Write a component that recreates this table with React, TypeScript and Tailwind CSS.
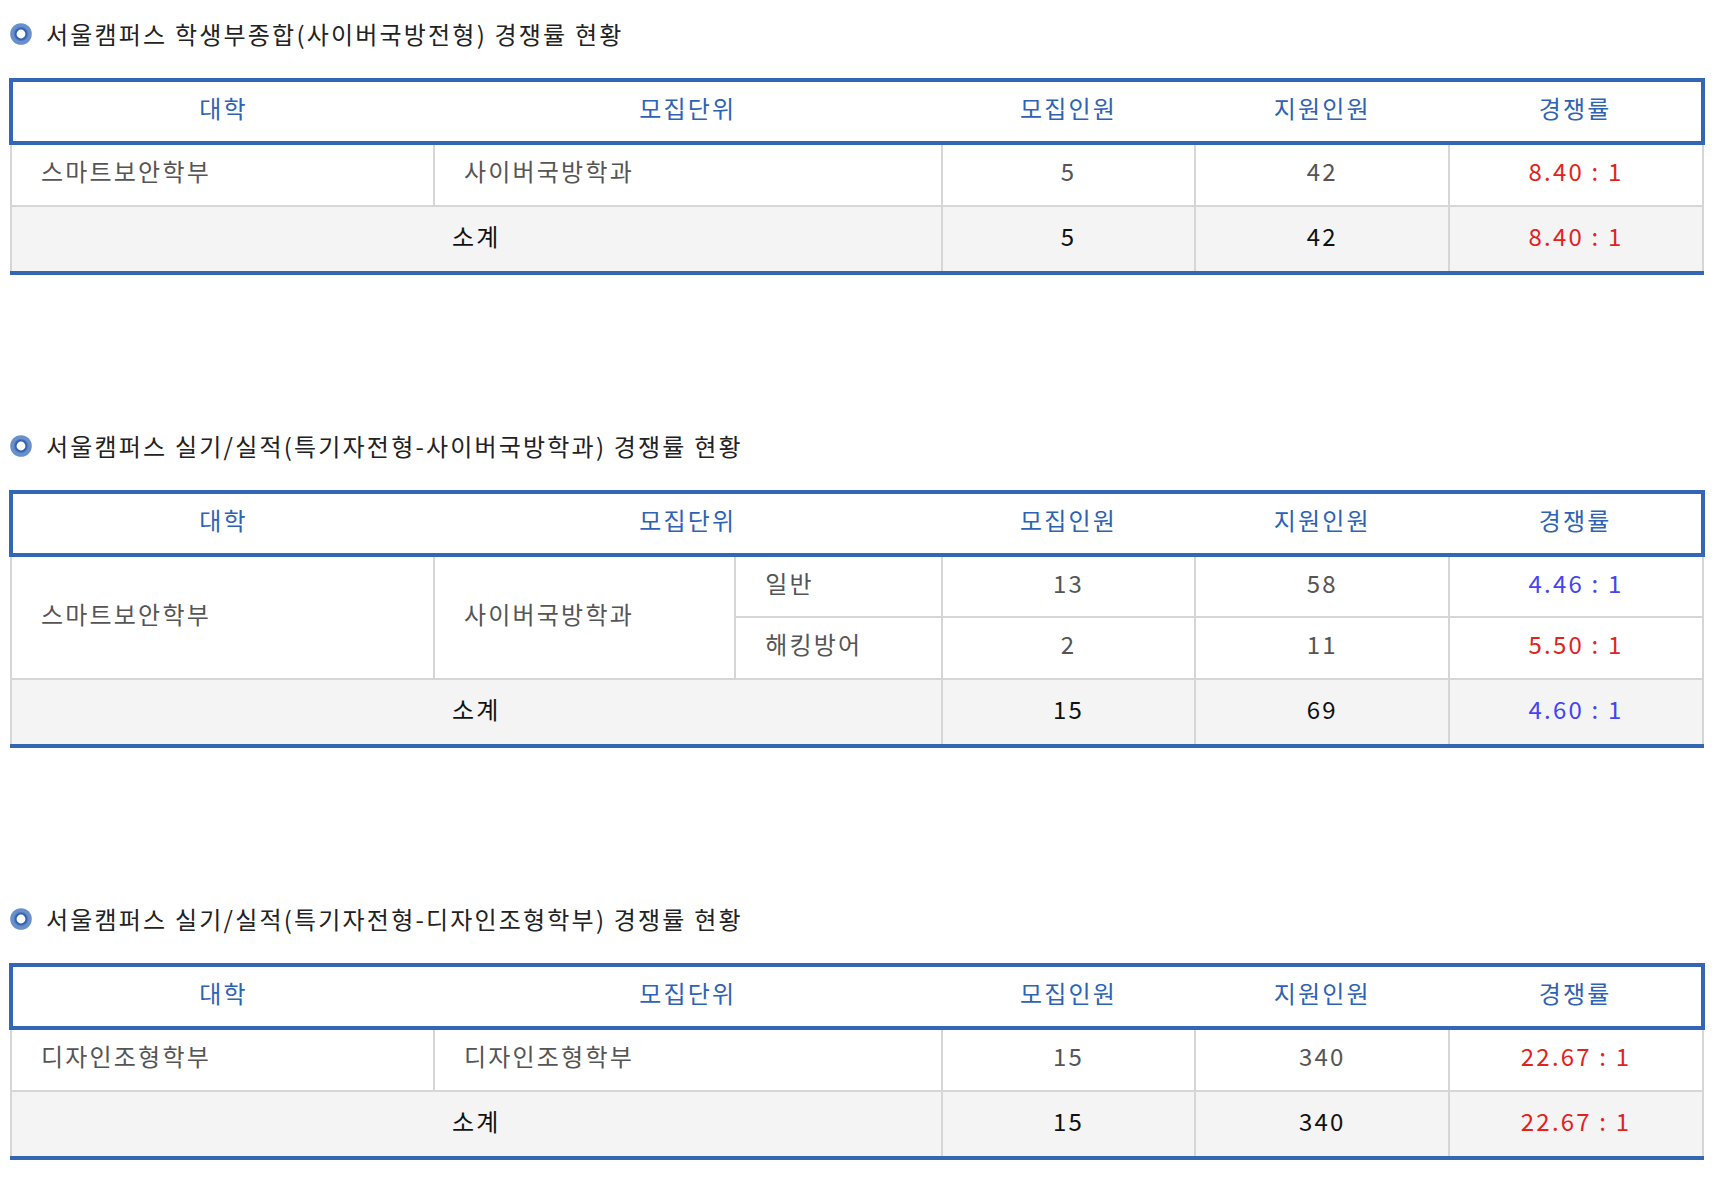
import React from 'react';

type Ratio = 'red' | 'blue';

type Row = {
    college?: { text: string; rowSpan: number };
    dept?: { text: string; rowSpan: number };
    track?: string;
    quota: number;
    applicants: number;
    ratio: string;
    ratioColor: Ratio;
};

type Section = {
    title: string;
    hasTrack: boolean;
    rows: Row[];
    total: { quota: number; applicants: number; ratio: string; ratioColor: Ratio };
};

const sections: Section[] = [
    {
        title: '서울캠퍼스 학생부종합(사이버국방전형) 경쟁률 현황',
        hasTrack: false,
        rows: [
            {
                college: { text: '스마트보안학부', rowSpan: 1 },
                dept: { text: '사이버국방학과', rowSpan: 1 },
                quota: 5,
                applicants: 42,
                ratio: '8.40 : 1',
                ratioColor: 'red',
            },
        ],
        total: { quota: 5, applicants: 42, ratio: '8.40 : 1', ratioColor: 'red' },
    },
    {
        title: '서울캠퍼스 실기/실적(특기자전형-사이버국방학과) 경쟁률 현황',
        hasTrack: true,
        rows: [
            {
                college: { text: '스마트보안학부', rowSpan: 2 },
                dept: { text: '사이버국방학과', rowSpan: 2 },
                track: '일반',
                quota: 13,
                applicants: 58,
                ratio: '4.46 : 1',
                ratioColor: 'blue',
            },
            { track: '해킹방어', quota: 2, applicants: 11, ratio: '5.50 : 1', ratioColor: 'red' },
        ],
        total: { quota: 15, applicants: 69, ratio: '4.60 : 1', ratioColor: 'blue' },
    },
    {
        title: '서울캠퍼스 실기/실적(특기자전형-디자인조형학부) 경쟁률 현황',
        hasTrack: false,
        rows: [
            {
                college: { text: '디자인조형학부', rowSpan: 1 },
                dept: { text: '디자인조형학부', rowSpan: 1 },
                quota: 15,
                applicants: 340,
                ratio: '22.67 : 1',
                ratioColor: 'red',
            },
        ],
        total: { quota: 15, applicants: 340, ratio: '22.67 : 1', ratioColor: 'red' },
    },
];

// colour of the ratio text
const ratioClass = (c: Ratio) => (c === 'red' ? 'text-[#e2231d]' : 'text-[#4545ee]');

const TitleIcon: React.FC = () => (
    <svg width="24" height="24" viewBox="0 0 24 24" className="shrink-0">
        <defs>
            <radialGradient id="ring" cx="50%" cy="50%" r="50%">
                <stop offset="35%" stopColor="#4f80cb" />
                <stop offset="70%" stopColor="#2d5dad" />
                <stop offset="100%" stopColor="#6a90cc" />
            </radialGradient>
        </defs>
        <circle cx="12" cy="12" r="7.6" fill="none" stroke="url(#ring)" strokeWidth="6.4" />
    </svg>
);

const CompetitionTable: React.FC<{ section: Section }> = ({ section }) => {
    const th = 'h-[63px] pb-[8px] border-y-4 border-[#3366b3] text-[#2e63b3] font-normal text-center';
    const cell = 'border-2 border-[#d6d6d6] pb-[8px] text-[#555]';
    const sum = 'border-2 border-[#d6d6d6] border-b-4 border-b-[#3366b3] pb-[6px] text-center';
    return (
        <div>
            <div className="flex items-center gap-[13px] h-[30px] text-[24px] tracking-[2.2px] text-[#222] pb-[2px]">
                <TitleIcon />
                <span>{section.title}</span>
            </div>
            <table className="w-full table-fixed border-collapse mt-[28px] text-[24px] tracking-[2.2px]">
                <colgroup>
                    <col className="w-[25%]" />
                    {section.hasTrack ? (
                        <>
                            <col className="w-[17.8%]" />
                            <col className="w-[12.2%]" />
                        </>
                    ) : (
                        <col className="w-[30%]" />
                    )}
                    <col className="w-[15%]" />
                    <col className="w-[15%]" />
                    <col className="w-[15%]" />
                </colgroup>
                <thead>
                    <tr>
                        <th className={`${th} border-l-4`}>대학</th>
                        <th className={th} colSpan={section.hasTrack ? 2 : 1}>모집단위</th>
                        <th className={th}>모집인원</th>
                        <th className={th}>지원인원</th>
                        <th className={`${th} border-r-4`}>경쟁률</th>
                    </tr>
                </thead>
                <tbody>
                    {section.rows.map((r, i) => (
                        <tr key={i}>
                            {r.college && (
                                <td className={`${cell} h-[63px] pl-[29px]`} rowSpan={r.college.rowSpan}>{r.college.text}</td>
                            )}
                            {r.dept && (
                                <td className={`${cell} pl-[29px]`} rowSpan={r.dept.rowSpan}>{r.dept.text}</td>
                            )}
                            {section.hasTrack && <td className={`${cell} h-[62px] pl-[29px]`}>{r.track}</td>}
                            <td className={`${cell} text-center`}>{r.quota}</td>
                            <td className={`${cell} text-center`}>{r.applicants}</td>
                            <td className={`border-2 border-[#d6d6d6] pb-[8px] text-center ${ratioClass(r.ratioColor)}`}>{r.ratio}</td>
                        </tr>
                    ))}
                    <tr className="bg-[#f4f4f4]">
                        <td className={`${sum} h-[67px] text-[#111]`} colSpan={section.hasTrack ? 3 : 2}>소계</td>
                        <td className={`${sum} text-[#111]`}>{section.total.quota}</td>
                        <td className={`${sum} text-[#111]`}>{section.total.applicants}</td>
                        <td className={`${sum} ${ratioClass(section.total.ratioColor)}`}>{section.total.ratio}</td>
                    </tr>
                </tbody>
            </table>
        </div>
    );
};

const App: React.FC = () => {
    return (
        <div
            className="min-h-screen bg-white px-[9px] pt-[20px] pb-[20px] flex flex-col gap-[157px]"
            style={{ fontFamily: '"Noto Sans CJK KR", "Noto Sans", sans-serif' }}
        >
            {sections.map((s, i) => (
                <CompetitionTable key={i} section={s} />
            ))}
        </div>
    );
};

export default App;
